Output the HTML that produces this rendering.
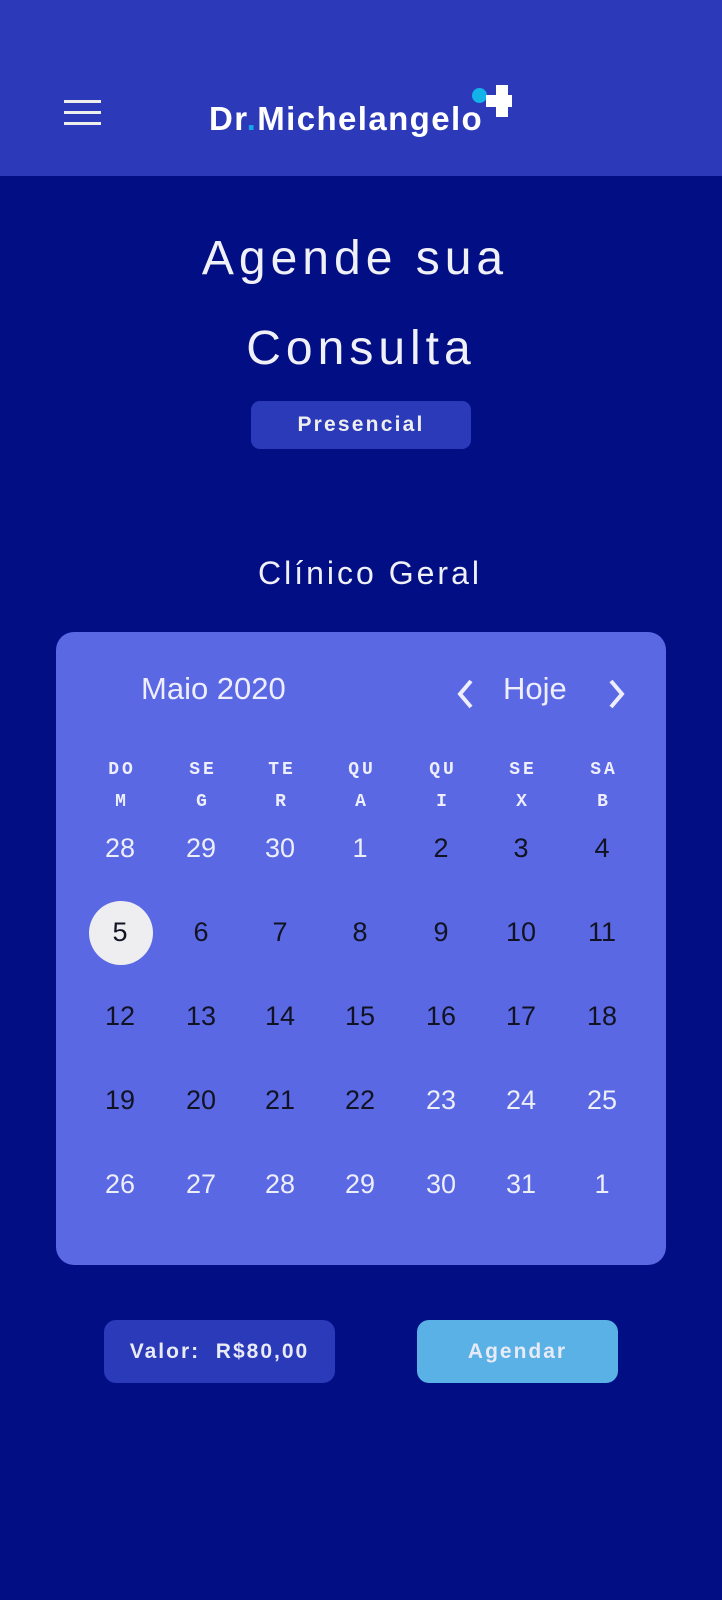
<!DOCTYPE html>
<html><head><meta charset="utf-8"><style>
*{margin:0;padding:0;box-sizing:border-box}
body{width:722px;height:1600px;background:#020f84;font-family:"Liberation Sans",sans-serif;position:relative;overflow:hidden}
.hdr{position:absolute;left:0;top:0;width:722px;height:176px;background:#2c3ab9}
.ham{position:absolute;left:64px;width:37px;height:3px;background:#eee}
.logo{position:absolute;left:209px;top:100px;color:#fff;font-weight:bold;font-size:33px;letter-spacing:1.4px}
.t{position:absolute;left:0;width:722px;text-align:center;color:#f0f0f8;font-size:48px;letter-spacing:5px}
.pill{position:absolute;left:251px;top:401px;width:220px;height:48px;background:#2b3ab8;border-radius:9px;color:#eee;font-size:21px;font-weight:bold;text-align:center;line-height:48px;letter-spacing:2.2px}
.cal{position:absolute;left:56px;top:632px;width:610px;height:633px;background:#5a68e3;border-radius:18px}
.c{position:absolute;width:80px;text-align:center;transform:translateX(-40px)}
.wd{font-family:"Liberation Mono",monospace;font-weight:bold;color:#eef;font-size:18px;letter-spacing:3px}
.d{font-size:27px;line-height:30px}
.l{color:#eceef8}.k{color:#111322}
.btn{position:absolute;top:1320px;height:63px;border-radius:12px;color:#e8eaf6;font-size:21px;font-weight:bold;text-align:center;line-height:63px;letter-spacing:2px}
</style></head><body>
<div class="hdr">
<div class="ham" style="top:100px"></div><div class="ham" style="top:111px"></div><div class="ham" style="top:122px"></div>
<div class="logo">Dr<span style="color:#14a6e6">.</span>Michelangelo</div>
<div style="position:absolute;left:472px;top:88px;width:15px;height:15px;border-radius:50%;background:#12b3e8"></div>
<div style="position:absolute;left:496px;top:85px;width:12px;height:32px;background:#fff"></div>
<div style="position:absolute;left:486px;top:95px;width:26px;height:12px;background:#fff"></div>
</div>
<div class="t" style="top:231px;padding-right:12px">Agende sua</div>
<div class="t" style="top:321px">Consulta</div>
<div class="pill">Presencial</div>
<div class="t" style="top:555px;font-size:32px;letter-spacing:3px;padding-left:18px">Clínico Geral</div>
<div class="cal"></div>
<div style="position:absolute;left:141px;top:671px;color:#eef;font-size:31px">Maio 2020</div>
<div style="position:absolute;left:503px;top:671px;color:#eef;font-size:31px">Hoje</div>
<svg style="position:absolute;left:454px;top:678px" width="22" height="32"><path d="M17 3L6 16L17 29" stroke="#eef" stroke-width="4" fill="none"/></svg>
<svg style="position:absolute;left:606px;top:678px" width="22" height="32"><path d="M5 3L16 16L5 29" stroke="#eef" stroke-width="4" fill="none"/></svg>
<div style="position:absolute;left:89px;top:901px;width:64px;height:64px;border-radius:50%;background:#eeeef0"></div>
<div id="g"></div>
<script>
var xs=[120,201,280,360,441,521,602],w=[["DO","M"],["SE","G"],["TE","R"],["QU","A"],["QU","I"],["SE","X"],["SA","B"]],h="";
for(var i=0;i<7;i++){h+='<div class="c wd" style="left:'+(xs[i]+2)+'px;top:760px">'+w[i][0]+'</div><div class="c wd" style="left:'+(xs[i]+2)+'px;top:792px">'+w[i][1]+'</div>';}
var days=[28,29,30,1,2,3,4,5,6,7,8,9,10,11,12,13,14,15,16,17,18,19,20,21,22,23,24,25,26,27,28,29,30,31,1],ys=[848,932,1016,1100,1184];
for(var j=0;j<35;j++){var r=Math.floor(j/7),c=j%7,cl=(j<4||j>=25)?"l":"k";h+='<div class="c d '+cl+'" style="left:'+xs[c]+'px;top:'+(ys[r]-15)+'px">'+days[j]+'</div>';}
document.getElementById("g").innerHTML=h;
</script>
<div class="btn" style="left:104px;width:231px;background:#2b3ab8">Valor:&nbsp; R$80,00</div>
<div class="btn" style="left:417px;width:201px;background:#59b1e5">Agendar</div>
</body></html>
